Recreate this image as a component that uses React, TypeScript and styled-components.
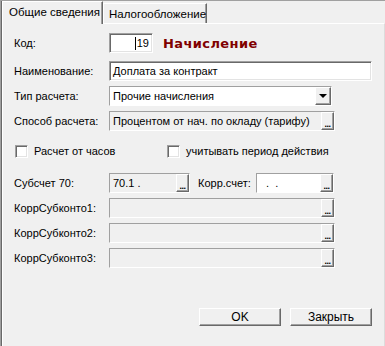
import React from "react";
import styled, { createGlobalStyle, css } from "styled-components";

const Global = createGlobalStyle`
  html, body { margin: 0; padding: 0; background: #f0f0f0; }
  body { font-family: "Liberation Sans", Arial, sans-serif; font-size: 11px; color: #000; }
`;

const Window = styled.div`
  width: 385px;
  height: 346px;
  box-sizing: border-box;
  border-top: 1px solid #a0a0a0;
  border-left: 1px solid #a0a0a0;
  box-shadow: inset 1px 0 0 #696969;
  padding-left: 1px;
  display: flex;
  flex-direction: column;
  background: #f0f0f0;
  overflow: hidden;
`;

const TabStrip = styled.div`
  height: 22px;
  display: flex;
  align-items: flex-end;
  position: relative;
  z-index: 1;
`;

const Tab = styled.div<{ $active?: boolean }>`
  box-sizing: border-box;
  padding: 0 0 0 6px;
  display: flex;
  align-items: center;
  white-space: nowrap;
  overflow: hidden;
  border-left: 1px solid #fff;
  border-top: 1px solid #fff;
  border-right: 1px solid #696969;
  box-shadow: inset -1px 0 0 #a0a0a0;
  background: #f0f0f0;
  font-size: 11.5px;
  ${(p) =>
    p.$active
      ? css`
          height: 23px;
          margin-bottom: -1px;
          width: 101px;
          padding-bottom: 2px;
        `
      : css`
          height: 20px;
          width: 104px;
          padding-left: 5px;
        `}
`;

const Panel = styled.div`
  flex: 1;
  border-top: 1px solid #fff;
  border-left: 1px solid #fff;
  border-right: 1px solid #dcdcdc;
  padding: 9px 0 0 11px;
  display: flex;
  flex-direction: column;
`;

const Row = styled.div<{ $mt?: number }>`
  display: flex;
  align-items: center;
  height: 20px;
  margin-top: ${(p) => p.$mt ?? 5}px;
`;

const Label = styled.div<{ $w?: number; $ml?: number }>`
  width: ${(p) => p.$w ?? 95}px;
  margin-left: ${(p) => p.$ml ?? 0}px;
  flex: none;
  white-space: nowrap;
`;

const Field = styled.div<{ $w: number; $white?: boolean; $align?: string }>`
  box-sizing: border-box;
  width: ${(p) => p.$w}px;
  height: 20px;
  flex: none;
  border-top: 1px solid #a0a0a0;
  border-left: 1px solid #a0a0a0;
  border-bottom: 1px solid #fff;
  border-right: 1px solid #fff;
  box-shadow: inset 1px 1px 0 #696969, inset -1px -1px 0 #e3e3e3;
  background: ${(p) => (p.$white ? "#fff" : "#f0f0f0")};
  display: flex;
  align-items: center;
  justify-content: ${(p) => p.$align ?? "flex-start"};
  padding: 0 3px;
  white-space: nowrap;
  overflow: hidden;
`;

const Caret = styled.span`
  display: inline-block;
  width: 1px;
  height: 13px;
  background: #000;
  margin-right: 1px;
`;

const Title = styled.div`
  margin-left: 10px;
  font-family: "DejaVu Sans", Verdana, sans-serif;
  font-weight: bold;
  font-size: 13px;
  letter-spacing: 0.4px;
  color: #800000;
`;

const RaisedBtn = styled.div<{ $w: number }>`
  box-sizing: border-box;
  width: ${(p) => p.$w}px;
  height: 18px;
  flex: none;
  background: #f0f0f0;
  border-top: 1px solid #fff;
  border-left: 1px solid #fff;
  border-right: 1px solid #696969;
  border-bottom: 1px solid #696969;
  box-shadow: inset -1px -1px 0 #a0a0a0;
  display: flex;
  align-items: center;
  justify-content: center;
`;

const FieldGroup = styled.div`
  display: flex;
  align-items: center;
  height: 20px;
  box-sizing: border-box;
  border-top: 1px solid #a0a0a0;
  border-left: 1px solid #a0a0a0;
  border-bottom: 1px solid #fff;
  border-right: 1px solid #fff;
  box-shadow: inset 1px 1px 0 #696969;
`;

const GroupText = styled.div<{ $w: number; $white?: boolean }>`
  box-sizing: border-box;
  width: ${(p) => p.$w}px;
  height: 18px;
  padding: 0 3px 0 3px;
  display: flex;
  align-items: center;
  background: ${(p) => (p.$white ? "#fff" : "#f0f0f0")};
  white-space: pre;
  overflow: hidden;
`;

const Dots = styled.span`
  font-size: 9px;
  font-weight: bold;
  line-height: 1;
  margin-top: 6px;
  letter-spacing: -0.5px;
`;

const Arrow = styled.span`
  width: 0;
  height: 0;
  border-left: 4px solid transparent;
  border-right: 4px solid transparent;
  border-top: 4px solid #000;
`;

const CheckRow = styled.div`
  display: flex;
  align-items: center;
  height: 14px;
  margin-top: 13px;
  padding-left: 1px;
`;

const Check = styled.div<{ $w: number }>`
  display: flex;
  align-items: center;
  width: ${(p) => p.$w}px;
  gap: 6px;
  white-space: nowrap;
`;

const Box = styled.span`
  box-sizing: border-box;
  flex: none;
  width: 13px;
  height: 13px;
  background: #fff;
  border-top: 1px solid #a0a0a0;
  border-left: 1px solid #a0a0a0;
  border-bottom: 1px solid #fff;
  border-right: 1px solid #fff;
  box-shadow: inset 1px 1px 0 #696969, inset -1px -1px 0 #e3e3e3;
`;

const Footer = styled.div`
  display: flex;
  justify-content: flex-end;
  gap: 9px;
  padding-right: 12px;
  margin-top: 40px;
`;

const PushButton = styled.div`
  box-sizing: border-box;
  width: 82px;
  height: 18px;
  background: #f0f0f0;
  border-top: 1px solid #fff;
  border-left: 1px solid #fff;
  border-right: 1px solid #696969;
  border-bottom: 1px solid #696969;
  box-shadow: inset -1px -1px 0 #a0a0a0;
  display: flex;
  align-items: center;
  justify-content: center;
  font-size: 12px;
`;

const Ellipsis = () => (
  <RaisedBtn $w={13}>
    <Dots>...</Dots>
  </RaisedBtn>
);

const SelectField = ({ w, text, white }: { w: number; text: string; white?: boolean }) => (
  <FieldGroup>
    <GroupText $w={w} $white={white}>{text}</GroupText>
    <Ellipsis />
  </FieldGroup>
);

export default function App() {
  return (
    <>
      <Global />
      <Window>
        <TabStrip>
          <Tab $active>Общие сведения</Tab>
          <Tab>Налогообложение</Tab>
        </TabStrip>
        <Panel>
          <Row $mt={0}>
            <Label>Код:</Label>
            <Field $w={44} $white $align="flex-end">
              <Caret />19
            </Field>
            <Title>Начисление</Title>
          </Row>
          <Row $mt={8}>
            <Label>Наименование:</Label>
            <Field $w={263} $white>Доплата за контракт</Field>
          </Row>
          <Row>
            <Label>Тип расчета:</Label>
            <FieldGroup>
              <GroupText $w={205} $white>Прочие начисления</GroupText>
              <RaisedBtn $w={16}>
                <Arrow />
              </RaisedBtn>
            </FieldGroup>
          </Row>
          <Row>
            <Label>Способ расчета:</Label>
            <SelectField w={211} text="Процентом от нач. по окладу (тарифу)" />
          </Row>
          <CheckRow>
            <Check $w={152}>
              <Box />
              Расчет от часов
            </Check>
            <Check $w={200}>
              <Box />
              учитывать период действия
            </Check>
          </CheckRow>
          <Row $mt={15}>
            <Label>Субсчет 70:</Label>
            <SelectField w={66} text="70.1 ." />
            <Label $w={58} $ml={8}>Корр.счет:</Label>
            <SelectField w={63} text="  .  ." white />
          </Row>
          <Row>
            <Label>КоррСубконто1:</Label>
            <SelectField w={211} text="" />
          </Row>
          <Row>
            <Label>КоррСубконто2:</Label>
            <SelectField w={211} text="" />
          </Row>
          <Row>
            <Label>КоррСубконто3:</Label>
            <SelectField w={211} text="" />
          </Row>
          <Footer>
            <PushButton>OK</PushButton>
            <PushButton>Закрыть</PushButton>
          </Footer>
        </Panel>
      </Window>
    </>
  );
}
